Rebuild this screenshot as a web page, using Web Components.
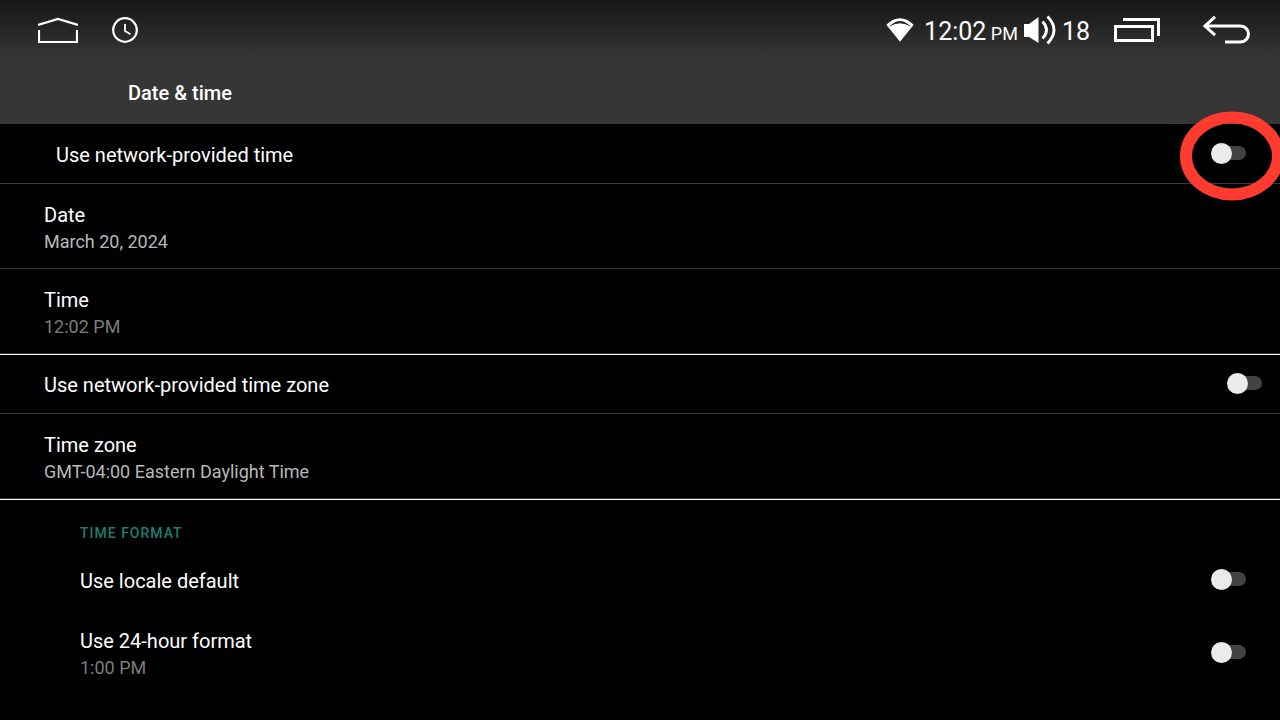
<!DOCTYPE html>
<html lang="en">
<head>
<meta charset="utf-8">
<meta name="viewport" content="width=device-width, initial-scale=1">
<title>Date &amp; time</title>
<style>
  html { background: #000; }
  body { margin: 0; min-height: 100vh; overflow-x: clip; font-family: Roboto, "Liberation Sans", sans-serif; color: #fff; }
</style>
</head>
<body>
<settings-screen></settings-screen>

<template id="status-bar-template">
  <style>
    :host { display: flex; align-items: center; height: 60px; padding: 0 30px 0 38px; }
    button { display: block; padding: 0; border: 0; background: none; color: inherit; }
    svg { display: block; fill: none; stroke: currentColor; }
    .spacer { flex: 1; }
    .clock { margin-left: 34px; }
    .wifi { margin-right: 10px; }
    .value { font-size: 25px; line-height: 32px; white-space: nowrap; padding-top: 4px; }
    .value small { font-size: 18px; line-height: 18px; }
    .volume { margin: 0 6px; }
    .recents { margin-left: 24px; }
    .back { margin-left: 43px; }
  </style>
  <button aria-label="Home">
    <svg width="40" height="28" viewBox="0 0 40 28"><path d="M0 9 20 3 40 9M1 14v12h38V14" stroke-width="2.2"/></svg>
  </button>
  <svg class="clock" width="26" height="26" viewBox="0 0 26 26"><circle cx="13" cy="13" r="11.8" stroke-width="2.2"/><path d="M13 7v7l5.5 3.2" stroke-width="1.8"/></svg>
  <span class="spacer"></span>
  <svg class="wifi" width="28" height="24" viewBox="0 0 28 24"><path d="M.3 6.700Q14-6.200 27.700 6.700L14 23.800zM3 8.800Q14 1.800 25 8.800L23.800 7.600Q14-1.800 4.200 7.600z" fill="currentColor" fill-rule="evenodd" stroke="none"/></svg>
  <span class="value">12:02<small> PM</small></span>
  <svg class="volume" width="32" height="30" viewBox="0 0 32 30"><path d="M0 9h5L14.500 2v26L5 22H0z" fill="currentColor" stroke="none"/><path d="M18.500 6.500Q26.500 15 18.500 23.500M23.500 1.500Q36.500 15 23.500 28.500" stroke-width="2.800"/></svg>
  <span class="value">18</span>
  <button class="recents" aria-label="Recent apps">
    <svg width="46" height="26" viewBox="0 0 46 26"><path d="M1.500 9.500h37v14h-37zM9 2.500h35.500V19" stroke-width="3"/></svg>
  </button>
  <button class="back" aria-label="Back">
    <svg width="47" height="28" viewBox="0 0 47 28"><path d="M12 .8 2 10l10 9.200M2 10h35.500a8 8 0 0 1 0 16H22" stroke-width="3"/></svg>
  </button>
</template>

<template id="setting-row-template">
  <style>
    :host { display: block; border-bottom: 1px solid #3a3a3a; }
    :host([section-end]) { border-bottom: 0; }
    :host([section-end])::after { content: ""; display: block; height: 1px; border-top: 1px solid #303234; background: #fff; }
    :host([plain]) { border-bottom: 0; }
    .row { display: flex; align-items: center; justify-content: space-between; box-sizing: border-box; width: 100%;
      padding: 15px 17px 13px 44px; border: 0; background: none; color: inherit; font: inherit; text-align: left; }
    :host([toggle]) .row { padding-top: 14px; padding-bottom: 14px; }
    :host([inset]) .row { padding-left: 56px; padding-right: 33px; }
    :host([indent]) .row { padding-left: 80px; padding-right: 33px; }
    .text { display: block; padding-top: 2px; }
    .title { display: block; font-size: 20px; line-height: 28px; }
    .summary { display: block; font-size: 18px; line-height: 26px; color: #b8b8b8; }
    :host([muted]) .summary { color: #7c7c7c; }
    .control { position: relative; padding-bottom: 1px; }
    input { appearance: none; display: block; position: relative; width: 36px; height: 21px; margin: 0; }
    input::before { content: ""; position: absolute; inset: 3px 1px 4px 5px; border-radius: 7px; background: #424242; }
    input::after { content: ""; position: absolute; inset: 0 auto 0 0; width: 21px; border-radius: 50%; background: #ebebeb; }
    input:checked::after { inset: 0 0 0 auto; }
  </style>
</template>

<template id="highlight-ring-template">
  <style>
    :host { position: absolute; left: -31px; top: -32px; z-index: 1; pointer-events: none; }
    svg { display: block; }
  </style>
  <svg width="104" height="90" viewBox="0 0 104 90"><ellipse cx="52" cy="45" rx="46" ry="38.5" fill="none" stroke="#ff3b30" stroke-width="12"/></svg>
</template>

<template id="settings-screen-template">
  <style>
    :host { display: block; }
    header { background: linear-gradient(#171717, #363636 60px); }
    h1 { margin: 0; padding: 19px 128px 17px; font-size: 20px; line-height: 28px; font-weight: 500; }
    main { padding-top: 1px; }
    section { display: grid; row-gap: 2px; }
    h2 { margin: 0; padding: 23px 80px 6px; font-size: 14px; line-height: 20px; font-weight: 500; letter-spacing: 1px; color: #1b7f71; }
  </style>
  <header>
    <status-bar></status-bar>
    <h1>Date &amp; time</h1>
  </header>
  <main>
    <setting-row inset toggle label="Use network-provided time"><highlight-ring></highlight-ring></setting-row>
    <setting-row label="Date" summary="March 20, 2024"></setting-row>
    <setting-row muted section-end label="Time" summary="12:02 PM"></setting-row>
    <setting-row toggle label="Use network-provided time zone"></setting-row>
    <setting-row section-end label="Time zone" summary="GMT-04:00 Eastern Daylight Time"></setting-row>
    <section>
      <h2>TIME FORMAT</h2>
      <setting-row indent plain toggle label="Use locale default"></setting-row>
      <setting-row indent plain muted toggle label="Use 24-hour format" summary="1:00 PM"></setting-row>
    </section>
  </main>
</template>

<script>
  class TemplateElement extends HTMLElement {
    constructor() {
      super();
      const template = document.getElementById(this.localName + '-template');
      this.attachShadow({ mode: 'open' }).append(template.content.cloneNode(true));
    }
  }

  class SettingRow extends TemplateElement {
    connectedCallback() {
      if (this.shadowRoot.querySelector('.row')) return;
      const isToggle = this.hasAttribute('toggle');
      const row = document.createElement(isToggle ? 'div' : 'button');
      row.className = 'row';
      const text = document.createElement(isToggle ? 'label' : 'span');
      text.className = 'text';
      for (const [part, attribute] of [['title', 'label'], ['summary', 'summary']]) {
        if (!this.hasAttribute(attribute)) continue;
        const line = document.createElement('span');
        line.className = part;
        line.textContent = this.getAttribute(attribute);
        text.append(line);
      }
      row.append(text);
      if (isToggle) {
        text.htmlFor = 'switch';
        const control = document.createElement('span');
        control.className = 'control';
        const input = document.createElement('input');
        input.type = 'checkbox';
        input.id = 'switch';
        input.setAttribute('role', 'switch');
        control.append(input, document.createElement('slot'));
        row.append(control);
      }
      this.shadowRoot.append(row);
    }
  }

  customElements.define('status-bar', class extends TemplateElement {});
  customElements.define('highlight-ring', class extends TemplateElement {});
  customElements.define('setting-row', SettingRow);
  customElements.define('settings-screen', class extends TemplateElement {});
</script>
</body>
</html>
